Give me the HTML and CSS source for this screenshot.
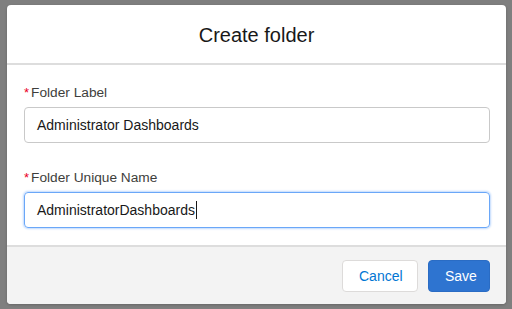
FILE: index.html
```html
<!DOCTYPE html>
<html lang="en">
<head>
    <meta charset="UTF-8">
    <title>Create folder</title>
    <link rel="stylesheet" href="styles.css">
</head>
<body>
    <div class="backdrop">
        <div class="modal">
            <div class="modal-header">
                <h2>Create folder</h2>
            </div>

            <div class="modal-body">
                <div class="form-field">
                    <label class="field-label"><abbr class="required">*</abbr>Folder Label</label>
                    <div class="field-input">Administrator Dashboards</div>
                </div>

                <div class="form-field">
                    <label class="field-label"><abbr class="required">*</abbr>Folder Unique Name</label>
                    <div class="field-input focused">AdministratorDashboards<span class="caret"></span></div>
                </div>
            </div>

            <div class="modal-footer">
                <button class="btn btn-neutral">Cancel</button>
                <button class="btn btn-brand">Save</button>
            </div>
        </div>
    </div>
</body>
</html>
```

FILE: styles.css
```css
body {
    margin: 0;
    padding: 0;
    background: #7f7f7f;
    font-family: 'Liberation Sans', Arial, sans-serif;
    color: #181818;
}

.backdrop {
    width: 512px;
    height: 309px;
    padding: 5px 6px 5px 7px;
    box-sizing: border-box;
}

.modal {
    height: 299px;
    background: #fff;
    border-radius: 4px;
    overflow: hidden;
    display: flex;
    flex-direction: column;
    box-shadow: 0 1px 3px rgba(0, 0, 0, 0.2);
}

.modal-header {
    height: 58px;
    border-bottom: 2px solid #dddddd;
    display: flex;
    align-items: center;
    justify-content: center;
}

.modal-header h2 {
    margin: 0;
    font-size: 20px;
    font-weight: 400;
    color: #181818;
    padding-top: 2px;
}

.modal-body {
    flex: 1;
    padding: 19px 16px 0 17px;
    display: flex;
    flex-direction: column;
    gap: 26px;
}

.field-label {
    display: flex;
    align-items: center;
    height: 16px;
    font-size: 13.7px;
    color: #3e3e3c;
    margin-bottom: 7px;
}

.required {
    color: #ea001e;
    text-decoration: none;
    margin-right: 2px;
    font-size: 13px;
}

.field-input {
    height: 34px;
    border: 1px solid #c9c9c9;
    border-radius: 4px;
    padding: 0 12px;
    display: flex;
    align-items: center;
    font-size: 14px;
    color: #181818;
}

.field-input.focused {
    border-color: #6aa7f8;
    box-shadow: 0 0 2px 1px #c0dafd;
}

.caret {
    display: inline-block;
    width: 1px;
    height: 18px;
    background: #181818;
    margin-left: 1px;
}

.modal-footer {
    height: 57px;
    border-top: 2px solid #dddddd;
    background: #f3f3f3;
    display: flex;
    align-items: center;
    justify-content: flex-end;
    gap: 10px;
    padding: 0 16px 0 0;
}

.btn {
    height: 32px;
    border-radius: 4px;
    font-family: inherit;
    font-size: 14px;
    padding: 0 16px;
    cursor: pointer;
}

.btn-neutral {
    width: 76px;
    background: #fff;
    border: 1px solid #dddbda;
    color: #0176d3;
}

.btn-brand {
    width: 62px;
    background: #2e74d0;
    border: 1px solid #2a6cc4;
    color: #fff;
}
```
